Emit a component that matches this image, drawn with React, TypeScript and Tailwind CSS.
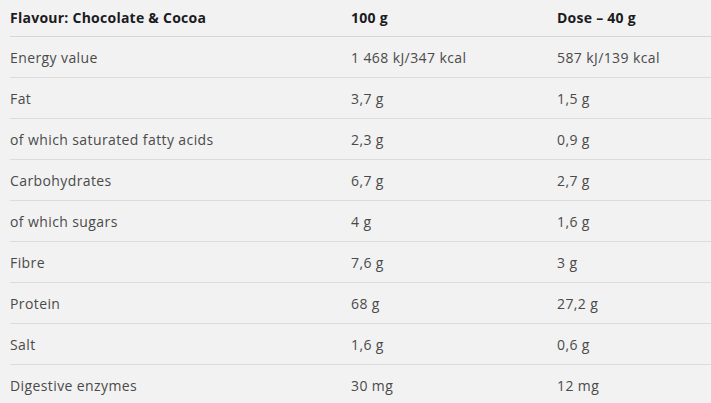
const rows: [string, string, string][] = [
  ["Energy value", "1 468 kJ/347 kcal", "587 kJ/139 kcal"],
  ["Fat", "3,7 g", "1,5 g"],
  ["of which saturated fatty acids", "2,3 g", "0,9 g"],
  ["Carbohydrates", "6,7 g", "2,7 g"],
  ["of which sugars", "4 g", "1,6 g"],
  ["Fibre", "7,6 g", "3 g"],
  ["Protein", "68 g", "27,2 g"],
  ["Salt", "1,6 g", "0,6 g"],
  ["Digestive enzymes", "30 mg", "12 mg"],
];

const App = () => {
  return (
    <div className="min-h-[403px] w-[711px] overflow-hidden bg-[#f2f2f2] pl-[10px] font-['Open_Sans',sans-serif] text-[14px]">
      <div className="grid h-[37px] grid-cols-[341px_206px_1fr] items-center border-b border-[#d6d6d6] pb-[2px] font-bold tracking-[0.25px] text-[#1b1b22]">
        <div>Flavour: Chocolate &amp; Cocoa</div>
        <div>100 g</div>
        <div>Dose – 40 g</div>
      </div>
      {rows.map(([name, per100, dose]) => (
        <div
          key={name}
          className="grid h-[41px] grid-cols-[341px_206px_1fr] items-center border-b border-[#dcdcdc] tracking-[0.4px] text-[#4a4a4a]"
        >
          <div>{name}</div>
          <div>{per100}</div>
          <div>{dose}</div>
        </div>
      ))}
    </div>
  );
};

export default App;
